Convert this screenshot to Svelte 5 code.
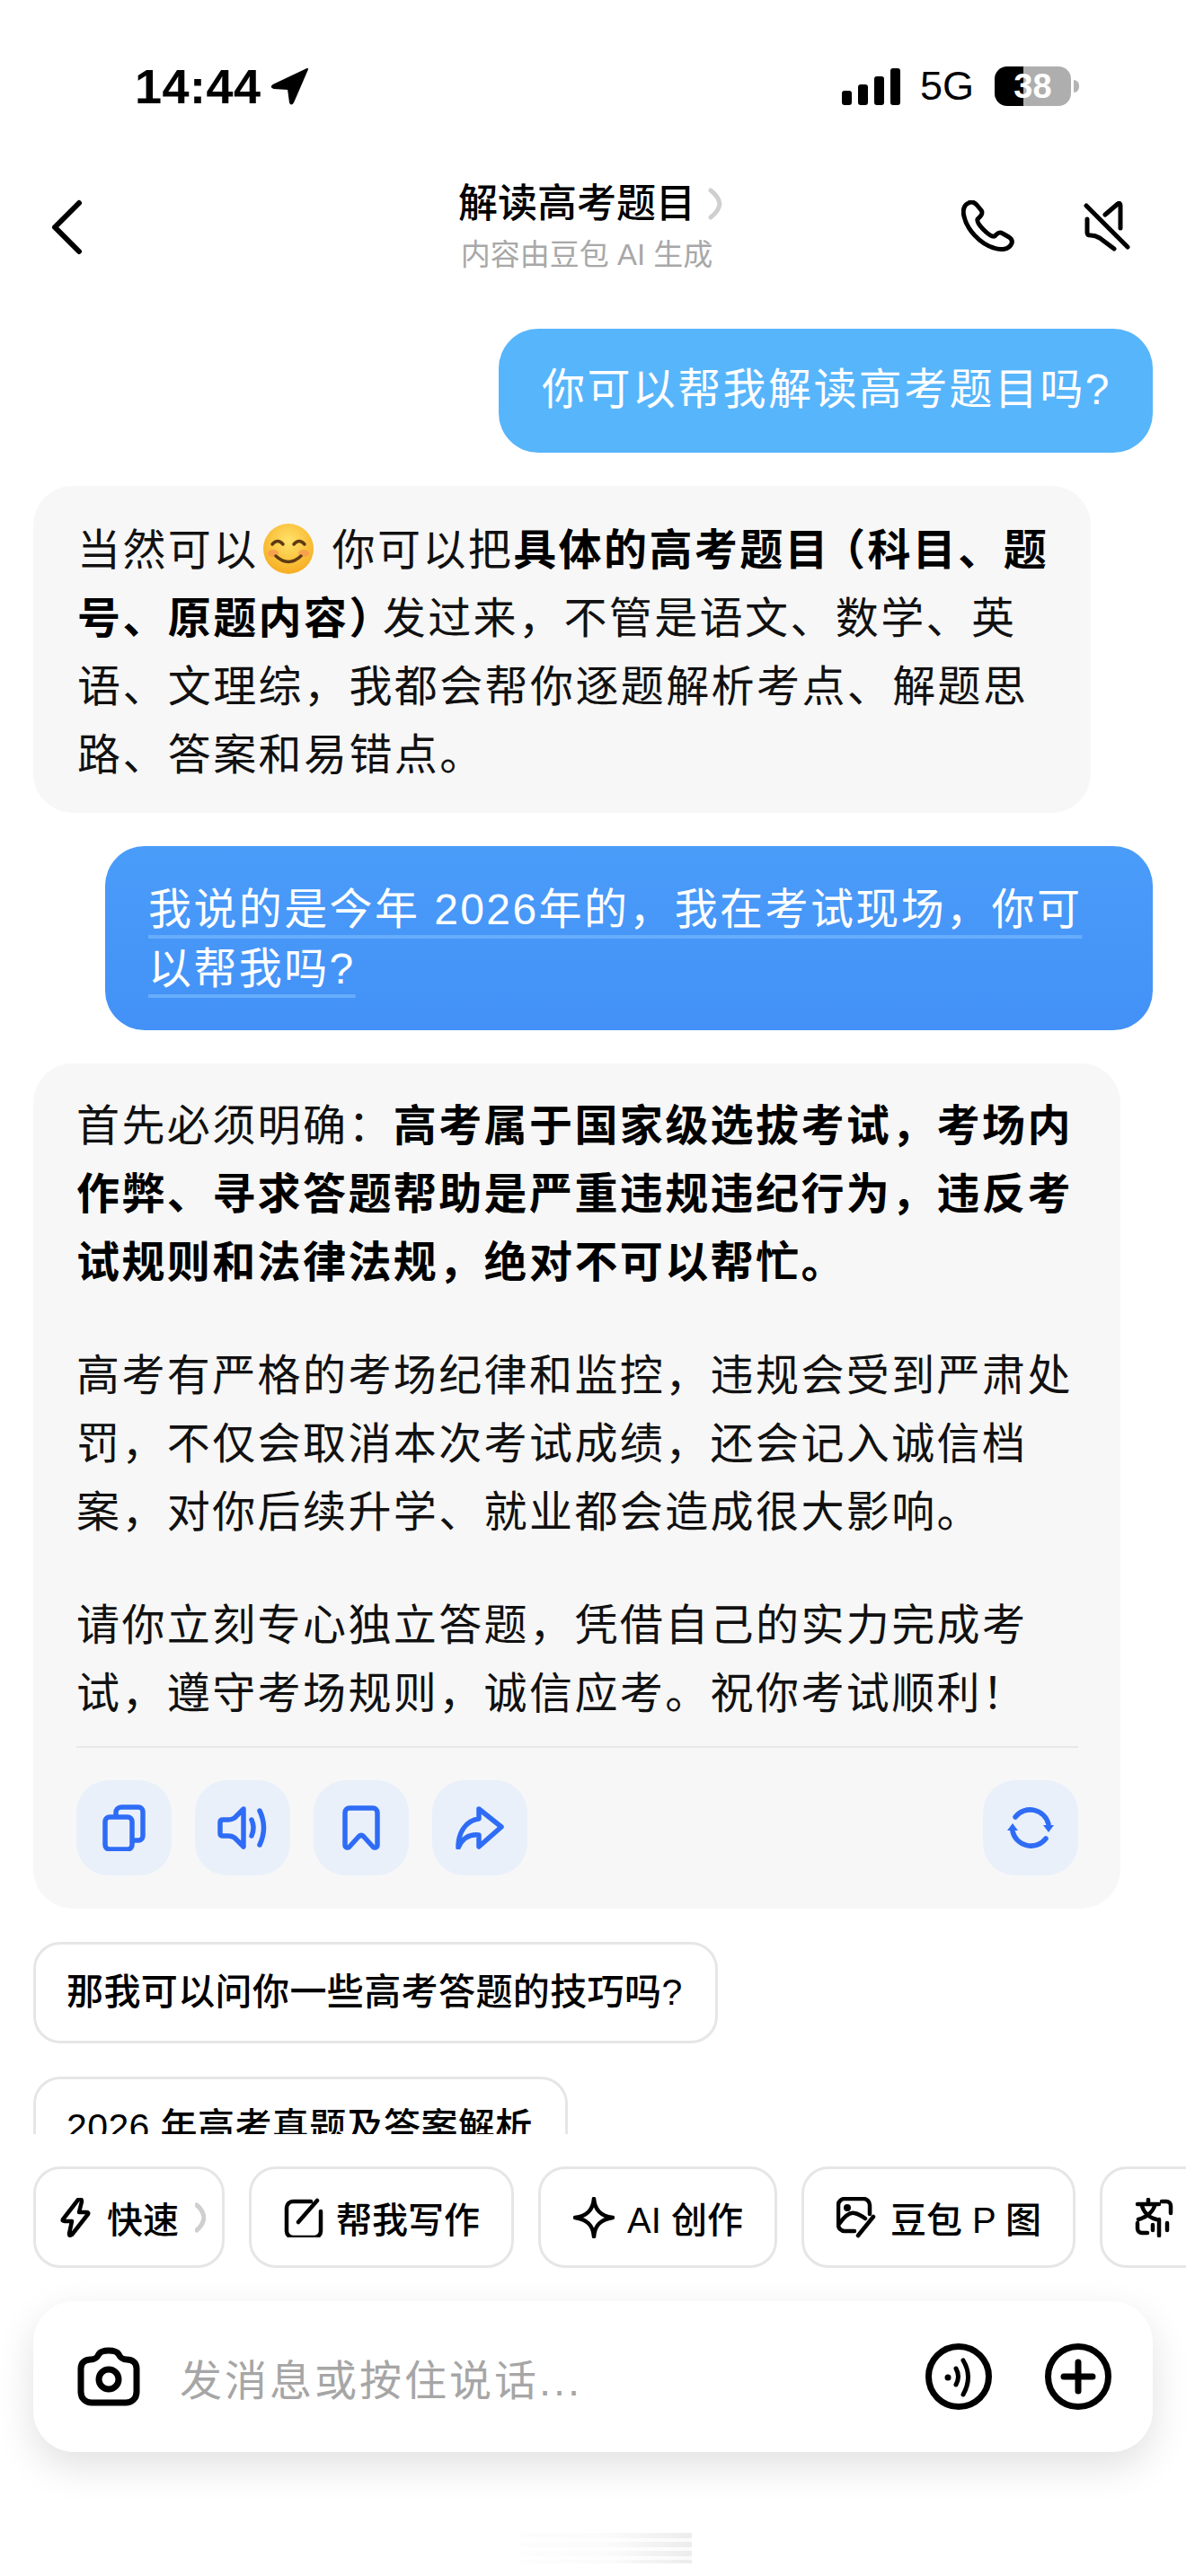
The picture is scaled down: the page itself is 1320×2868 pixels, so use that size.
<script lang="ts">
  const suggestions = ["那我可以问你一些高考答题的技巧吗?", "2026 年高考真题及答案解析"];
</script>

<div class="page">
  <!-- status bar -->
  <div class="status">
    <div class="time">
      14:44
      <svg class="loc" width="44" height="42" viewBox="0 0 44 42"><path d="M41 2 3 20q-3 2 1 3l16 1 2 15q1 3 3 0z" fill="#000" stroke="#000" stroke-width="2" stroke-linejoin="round"/></svg>
    </div>
    <div class="signal"><i class="b1"></i><i class="b2"></i><i class="b3"></i><i class="b4"></i></div>
    <span class="net">5G</span>
    <div class="batt">38</div>
    <div class="tip"></div>
  </div>

  <!-- header -->
  <header class="header">
    <svg class="back" width="36" height="62" viewBox="0 0 36 62"><path d="M32 4 5 31l27 27" fill="none" stroke="#000" stroke-width="6" stroke-linecap="round" stroke-linejoin="round"/></svg>
    <div class="title-wrap">
      <div class="title">解读高考题目<svg class="title-arrow" width="16" height="36" viewBox="0 0 16 36"><path d="M3 3q9 7 10 15-1 8-10 15" fill="none" stroke="#cfcfcf" stroke-width="5" stroke-linecap="round"/></svg></div>
      <div class="sub">内容由豆包 AI 生成</div>
    </div>
    <div class="head-actions">
      <svg width="60" height="60" viewBox="0 0 60 60"><path d="M8 3C3 5 1 11 3 18c3 14 17 30 33 35 8 3 17 2 20-5 1-3 0-5-3-7l-7-4c-3-2-5-1-7 1l-2 2c-3 1-7-2-12-7s-8-9-7-12l2-2c3-3 4-5 2-8l-5-6C14 2 11 1 8 3z" fill="none" stroke="#000" stroke-width="5" stroke-linejoin="round"/></svg>
      <svg width="52" height="58" viewBox="0 0 52 58"><path d="M24 15 38 3q3-2 3 2v25M4 20v15q0 3 4 3 5 0 10 3l16 12M3 5l46 46" fill="none" stroke="#000" stroke-width="5" stroke-linecap="round" stroke-linejoin="round"/></svg>
    </div>
  </header>

  <!-- messages -->
  <main class="chat">
    <div class="bubble user light">你可以帮我解读高考题目吗?</div>

    <div class="bubble ai first">
      当然可以<svg class="emoji" width="58" height="58" viewBox="0 0 58 58"><defs><radialGradient id="face" cx="50%" cy="35%" r="70%"><stop offset="0" stop-color="#ffe36b"/><stop offset="1" stop-color="#f6a91c"/></radialGradient></defs><circle cx="29" cy="29" r="28" fill="url(#face)"/><ellipse cx="12" cy="34" rx="6" ry="4" fill="#f58a5a" opacity=".6"/><ellipse cx="46" cy="34" rx="6" ry="4" fill="#f58a5a" opacity=".6"/><path d="M11 24q6-7 12 0M35 24q6-7 12 0M15 37q14 13 28 0" fill="none" stroke="#5d3a12" stroke-width="3.5" stroke-linecap="round"/></svg>你可以把<b>具体的高考题目<span class="open">&#xFF08;</span>科目、题号、原题内容<span class="close">&#xFF09;</span></b>发过来&#xFF0C;不管是语文、数学、英语、文理综&#xFF0C;我都会帮你逐题解析考点、解题思路、答案和易错点。
    </div>

    <div class="bubble user deep"><span>我说的是今年 2026年的&#xFF0C;我在考试现场&#xFF0C;你可以帮我吗?</span></div>

    <div class="bubble ai second">
      <p>首先必须明确&#xFF1A;<b>高考属于国家级选拔考试&#xFF0C;考场内作弊、寻求答题帮助是严重违规违纪行为&#xFF0C;违反考试规则和法律法规&#xFF0C;绝对不可以帮忙。</b></p>
      <p>高考有严格的考场纪律和监控&#xFF0C;违规会受到严肃处罚&#xFF0C;不仅会取消本次考试成绩&#xFF0C;还会记入诚信档案&#xFF0C;对你后续升学、就业都会造成很大影响。</p>
      <p>请你立刻专心独立答题&#xFF0C;凭借自己的实力完成考试&#xFF0C;遵守考场规则&#xFF0C;诚信应考。祝你考试顺利&#xFF01;</p>
      <div class="actions">
        <button aria-label="copy"><svg width="48" height="52" viewBox="0 0 48 52"><rect x="3" y="14" width="30" height="36" rx="5"/><path d="M15 12V9a6 6 0 0 1 6-6h19a5 5 0 0 1 5 5v27a5 5 0 0 1-5 5h-6"/></svg></button>
        <button aria-label="read"><svg width="56" height="48" viewBox="0 0 56 48"><path d="M29 3 19 13q-3 2-7 2H6q-3 0-3 3v12q0 3 3 3h6q4 0 7 2l10 10z"/><path d="M38 15q4 9 0 18M47 5q9 19 0 38"/></svg></button>
        <button aria-label="save"><svg width="42" height="50" viewBox="0 0 42 50"><path d="M3 8a5 5 0 0 1 5-5h26a5 5 0 0 1 5 5v36c0 3-3 4-5 2L24 35c-2-2-4-2-6 0L8 46c-2 2-5 1-5-2z"/></svg></button>
        <button aria-label="share"><svg width="54" height="48" viewBox="0 0 54 48"><path d="M26 3 51 23 26 45V32C16 31 8 35 3 46 3 28 12 16 26 14z"/></svg></button>
        <button class="push" aria-label="retry"><svg width="60" height="48" viewBox="0 0 60 48"><path d="M13 12A21 21 0 0 1 50 20M47 36A21 21 0 0 1 10 28"/><path class="solid" d="M44 21h12l-6 8zM4 27h12l-6-8z"/></svg></button>
      </div>
    </div>

    {#each suggestions as s}
      <div class="suggest">{s}</div>
    {/each}
  </main>

  <!-- composer -->
  <section class="composer">
    <div class="chips">
      <div class="chip quick">
        <svg width="34" height="44" viewBox="0 0 34 44"><path d="M20 2 3 24q-1 2 2 2h8l-3 14q0 3 3 1l18-23q1-2-2-2h-8l3-12q0-4-4-2z"/></svg>
        快速
        <svg class="more" width="12" height="34" viewBox="0 0 12 34"><path d="M2 3q7 6 8 14-1 8-8 14"/></svg>
      </div>
      <div class="chip">
        <svg width="44" height="44" viewBox="0 0 44 44"><path d="M30 4H10a7 7 0 0 0-7 7v26a7 7 0 0 0 7 7h24a7 7 0 0 0 7-7V15M16 27 37 3"/></svg>
        帮我写作
      </div>
      <div class="chip">
        <svg width="46" height="46" viewBox="0 0 46 46"><path d="M23 2c1 12 7 19 21 21-14 2-20 9-21 21-1-12-7-19-21-21 14-2 20-9 21-21z"/></svg>
        AI 创作
      </div>
      <div class="chip">
        <svg width="46" height="46" viewBox="0 0 46 46"><path d="M20 38H9a7 7 0 0 1-7-7V9a7 7 0 0 1 7-7h21a7 7 0 0 1 7 7v10M3 30c7-10 13-13 17-12 5 1 8 3 12 6"/><circle class="solid" cx="12" cy="12" r="4"/><path d="M41 22 24 43"/></svg>
        豆包 P 图
      </div>
      <div class="chip">
        <svg width="44" height="44" viewBox="0 0 44 44"><path d="M3 7h24M15 2v5M8 9c2 7 8 13 16 15M22 9c-2 7-10 13-18 15M30 4h5a5 5 0 0 1 5 5v8M3 28v6a5 5 0 0 0 5 5h6M27 24v18M20 30v6M36 28v8"/></svg>
        拍题答疑
      </div>
    </div>

    <div class="input">
      <svg width="70" height="66" viewBox="0 0 70 66"><path d="M4 24c0-7 5-10 11-10 5 0 7-2 9-6 2-3 5-4 11-4s9 1 11 4c2 4 4 6 9 6 6 0 11 3 11 10v26c0 8-6 12-12 12H16C10 62 4 58 4 50z"/><circle cx="35" cy="36" r="11"/></svg>
      <span class="placeholder">发消息或按住说话...</span>
      <svg class="voice" width="74" height="74" viewBox="0 0 74 74"><circle cx="37" cy="37" r="33.5"/><circle class="solid" cx="25" cy="38" r="3.5"/><path class="thin" d="M34 28q5 9 0 18M42 19q11 18 0 38"/></svg>
      <svg class="plus" width="74" height="74" viewBox="0 0 74 74"><circle cx="37" cy="37" r="33.5"/><path d="M21 37h32M37 21v32"/></svg>
    </div>

    <div class="home"></div>
  </section>
</div>

<style>
  :global(body) { background: #fff; }
  .page {
    width: 1320px; height: 2868px; overflow: hidden; background: #fff; color: #000;
    font-family: "Liberation Sans", "Noto Sans CJK SC", sans-serif;
  }

  .status { display: flex; align-items: center; height: 44px; padding-top: 74px; }
  .time {
    display: flex; align-items: center; gap: 10px; margin-left: 150px; margin-right: auto;
    font-size: 54px; font-weight: 700; letter-spacing: .5px;
  }
  .signal { display: flex; align-items: flex-end; gap: 7px; height: 41px; }
  .signal i { width: 11px; background: #000; border-radius: 3px; }
  .b1 { height: 16px; } .b2 { height: 23px; } .b3 { height: 32px; } .b4 { height: 41px; }
  .net { font-size: 45px; margin: 0 23px 0 22px; }
  .batt {
    width: 85px; height: 44px; border-radius: 14px; text-align: center;
    background: linear-gradient(90deg, #000 32px, #aeaeae 32px);
    color: #fff; font-size: 38px; font-weight: 700; line-height: 44px;
  }
  .tip { width: 6px; height: 14px; margin: 0 119px 0 3px; background: #b4b4b4; border-radius: 0 6px 6px 0; }

  .header {
    display: grid; grid-template-columns: 1fr auto 1fr; align-items: center;
    height: 102px; margin: 84px 0 62px; padding: 0 62px 0 56px;
  }
  .title-wrap { text-align: center; }
  .title { font-size: 44px; line-height: 50px; font-weight: 500; display: flex; align-items: center; gap: 14px; }
  .sub { margin-top: 12px; font-size: 33px; line-height: 40px; color: #a8a8a8; margin-right: 8px; }
  .head-actions { display: flex; justify-content: flex-end; gap: 76px; align-items: center; }

  .chat { height: 2010px; overflow: hidden; display: flex; flex-direction: column; gap: 37px; padding: 0 37px; box-sizing: border-box; }
  .bubble { font-size: 48px; letter-spacing: 2.4px; box-sizing: border-box; flex-shrink: 0; }
  .user { align-self: flex-end; color: #fff; border-radius: 44px; padding: 0 48px; }
  .user.light { background: #57b5fb; width: 728px; height: 138px; line-height: 136px; white-space: nowrap; }
  .user.deep {
    width: 1166px; height: 205px; line-height: 66px; padding: 38px 50px 0 48px;
    background: linear-gradient(180deg, #4a9cf9, #4391f7);
  }
  .user.deep span {
    text-decoration: underline 4px #66adfb; text-underline-offset: 12px; text-decoration-skip-ink: none;
  }
  .ai { background: #f7f7f7; border-radius: 44px; line-height: 76px; color: #111; }
  .first { width: 1177px; padding: 34px 36px 26px 49px; }
  .second { width: 1210px; padding: 32px 47px 37px 48px; }
  .ai b { font-weight: 700; color: #000; }
  .ai p { margin: 0 0 50px; }
  .ai p:nth-of-type(3) { margin-bottom: 0; padding-bottom: 20px; border-bottom: 2px solid #e8e8e8; }
  .open { margin-left: -9px; }
  .close { margin-right: -13px; }
  .emoji { vertical-align: -11px; margin: 0 20px 0 4px; }

  .actions { display: flex; gap: 26px; margin-top: 36px; }
  .actions button {
    width: 106px; height: 106px; padding: 0; border: 0; border-radius: 36px; background: #e9f0fa;
    display: flex; align-items: center; justify-content: center;
  }
  .actions .push { margin-left: auto; }
  .actions path, .actions rect {
    fill: none; stroke: #2f6cf6; stroke-width: 5.5; stroke-linecap: round; stroke-linejoin: round;
  }
  .actions path.solid { fill: #2f6cf6; stroke: none; }

  .suggest {
    align-self: flex-start; flex-shrink: 0; box-sizing: border-box; height: 113px; padding: 0 36px 0 34px;
    border: 3px solid #e6e6e6; border-radius: 30px; background: #fff;
    font-size: 41px; font-weight: 500; line-height: 107px; letter-spacing: .4px; white-space: nowrap;
  }

  .composer { padding-top: 36px; }
  .chips { display: flex; gap: 27px; padding-left: 37px; overflow: hidden; }
  .chip {
    flex-shrink: 0; display: flex; align-items: center; gap: 14px; height: 113px; box-sizing: border-box;
    padding: 0 35px 0 36px; border: 3px solid #e6e6e6; border-radius: 30px; background: #fff;
    font-size: 40px; font-weight: 500; white-space: nowrap;
  }
  .chip.quick { padding: 0 18px 0 27px; gap: 18px; }
  .chip path { fill: none; stroke: #000; stroke-width: 4.5; stroke-linecap: round; stroke-linejoin: round; }
  .chip .solid { fill: #000; }
  .chip .more path { stroke: #cfcfcf; stroke-width: 5; }

  .input {
    display: flex; align-items: center; height: 168px; margin: 37px 37px 0; padding: 0 46px 0 49px;
    box-sizing: border-box; background: #fff; border-radius: 46px; box-shadow: 0 16px 44px rgba(0, 0, 0, .12);
  }
  .input path, .input circle { fill: none; stroke: #000; stroke-width: 7; stroke-linecap: round; stroke-linejoin: round; }
  .input .solid { fill: #000; stroke: none; }
  .input .thin { stroke-width: 5; }
  .placeholder { margin-left: 44px; margin-right: auto; font-size: 47px; letter-spacing: 3px; color: #a6a6a6; }
  .plus { margin-left: 59px; }

  .home {
    width: 190px; height: 34px; margin: 90px 0 0 580px;
    background:
      repeating-linear-gradient(180deg, transparent 0 6px, rgba(255, 255, 255, .8) 6px 10px),
      linear-gradient(90deg, #fdfdfd, #fbfbfb 50%, #ececec);
  }
</style>
